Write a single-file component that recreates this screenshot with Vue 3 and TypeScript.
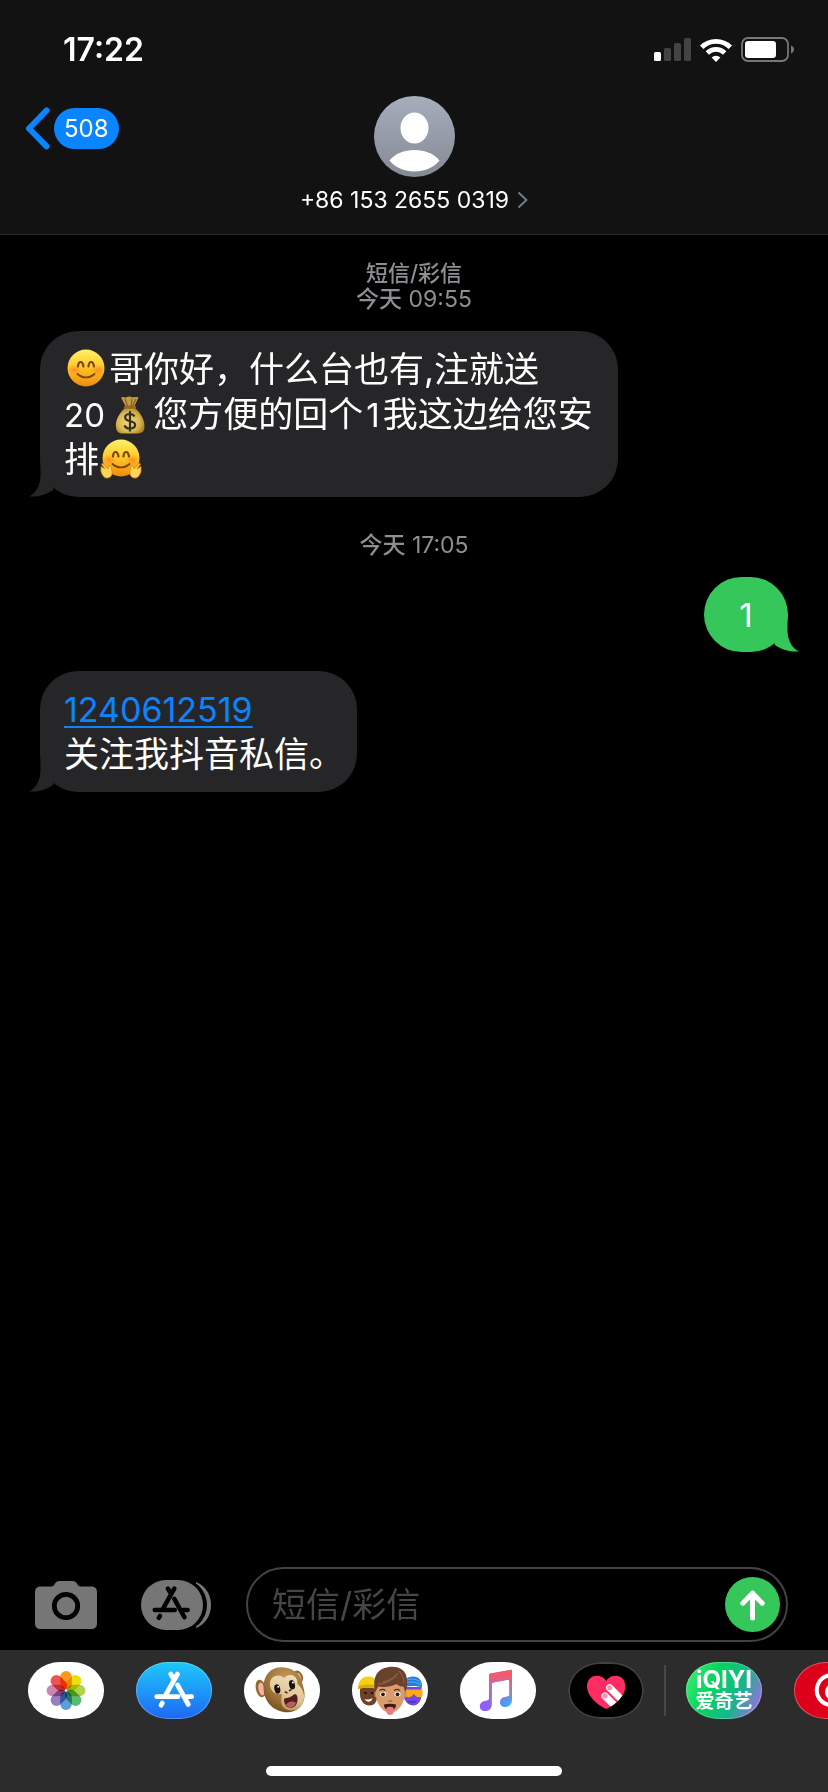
<script setup lang="ts">
import { ref } from 'vue'

type Piece =
  | { kind: 'text' | 'number' | 'link'; value: string }
  | { kind: 'smile' | 'money' | 'hug'; value: string }

interface Message {
  id: number
  sent: boolean
  endsWithStop?: boolean
  lines: Piece[][]
}

interface Group {
  id: number
  service?: string
  day: string
  time: string
  messages: Message[]
}

const clock = '17:22'
const unread = 508
const contact = '+86 153 2655 0319'
const draft = ref('')

const groups: Group[] = [
  {
    id: 1,
    service: '短信/彩信',
    day: '今天',
    time: '09:55',
    messages: [
      {
        id: 1,
        sent: false,
        lines: [
          [
            { kind: 'smile', value: '微笑' },
            { kind: 'text', value: '哥你好，什么台也有,注就送' },
          ],
          [
            { kind: 'number', value: '20 ' },
            { kind: 'money', value: '钱袋' },
            { kind: 'text', value: '您方便的回个' },
            { kind: 'number', value: '1' },
            { kind: 'text', value: '我这边给您安' },
          ],
          [
            { kind: 'text', value: '排' },
            { kind: 'hug', value: '拥抱' },
          ],
        ],
      },
    ],
  },
  {
    id: 2,
    day: '今天',
    time: '17:05',
    messages: [
      { id: 2, sent: true, lines: [[{ kind: 'number', value: '1' }]] },
      {
        id: 3,
        sent: false,
        endsWithStop: true,
        lines: [
          [{ kind: 'link', value: '1240612519' }],
          [{ kind: 'text', value: '关注我抖音私信。' }],
        ],
      },
    ],
  },
]

const petals = ['#f8981d', '#ecdf0c', '#b3d24b', '#5cbb72', '#5a9fdc', '#9680bf', '#d084b2', '#f05450']
</script>

<template>
  <div class="screen" lang="zh-CN">
    <header class="top">
      <div class="status">
        <time class="clock">{{ clock }}</time>
        <div class="indicators">
          <svg class="signal" viewBox="0 0 37 24" role="img" aria-label="信号">
            <rect x="0" y="14" width="7" height="9" rx="1.6" fill="#fff" />
            <rect x="10" y="10" width="7" height="13" rx="1.6" fill="#434343" />
            <rect x="20" y="5" width="7" height="18" rx="1.6" fill="#434343" />
            <rect x="30" y="0" width="7" height="23" rx="1.6" fill="#434343" />
          </svg>
          <svg class="wifi" viewBox="0 0 32 24" role="img" aria-label="无线网络">
            <g fill="none" stroke="#fff" stroke-width="4.8">
              <path d="M1.7 9.2a20.4 20.4 0 0 1 28.6 0" />
              <path d="M7.3 15a12.4 12.4 0 0 1 17.4 0" />
            </g>
            <path d="M16 24l-4.4-4.5a6.3 6.3 0 0 1 8.8 0z" fill="#fff" />
          </svg>
          <svg class="battery" viewBox="0 0 53 25" role="img" aria-label="电量">
            <rect x="1" y="1" width="46" height="23" rx="6" fill="none" stroke="#777" stroke-width="1.8" />
            <rect x="4" y="4" width="31" height="17" rx="3.2" fill="#fff" />
            <path d="M50 8.5c2 .8 3 2.2 3 4s-1 3.200-3 4z" fill="#777" />
          </svg>
        </div>
      </div>
      <div class="nav">
        <button class="back" type="button" aria-label="返回，508 条未读">
          <svg class="chevron" viewBox="0 0 25 43" aria-hidden="true">
            <path d="M21.500 3.500L4 21.500l17.500 17.800" fill="none" stroke="#0a84ff" stroke-width="6" stroke-linecap="round" stroke-linejoin="round" />
          </svg>
          <span class="badge">{{ unread }}</span>
        </button>
        <button class="contact" type="button">
          <svg class="avatar" viewBox="0 0 81 81" aria-hidden="true">
            <defs>
              <linearGradient id="avatarFill" x1="0" y1="0" x2="0" y2="1">
                <stop offset="0" stop-color="#a6adbc" />
                <stop offset="1" stop-color="#858a94" />
              </linearGradient>
            </defs>
            <circle cx="40.500" cy="40.500" r="40.500" fill="url(#avatarFill)" />
            <ellipse cx="40.500" cy="32" rx="14" ry="15.500" fill="#fff" />
            <path d="M15.500 64.500C21 57.500 30 54 40.500 54s19.500 3.500 25 10.500C59 72 50.500 75.500 40.500 75.500S22 72 15.500 64.500z" fill="#fff" />
          </svg>
          <span class="phone">
            {{ contact }}
            <svg class="more" viewBox="0 0 10 18" aria-hidden="true">
              <path d="M1 2l7.500 7L1 16" fill="none" stroke="#73808f" stroke-width="1.8" stroke-linecap="round" />
            </svg>
          </span>
        </button>
      </div>
    </header>

    <main class="thread">
      <section v-for="group in groups" :key="group.id" class="group">
        <p class="stamp">
          <strong v-if="group.service">{{ group.service }}</strong>
          <span class="when"><b>{{ group.day }}</b> {{ group.time }}</span>
        </p>
        <div v-for="m in group.messages" :key="m.id" class="bubble" :class="{ sent: m.sent, stop: m.endsWithStop }">
          <div v-for="(line, i) in m.lines" :key="i" class="line">
            <template v-for="(p, j) in line" :key="j">
              <span v-if="p.kind === 'text'">{{ p.value }}</span>
              <span v-else-if="p.kind === 'number'" class="number" :class="{ inner: j > 0 }">{{ p.value }}</span>
              <a v-else-if="p.kind === 'link'" class="link" :href="`tel:${p.value}`">{{ p.value }}</a>
              <svg v-else-if="p.kind === 'money'" class="emoji bag" viewBox="2 0 39 38" role="img" :aria-label="p.value">
                <defs>
                  <radialGradient id="bagFill" cx=".45" cy=".55" r=".6">
                    <stop offset="0" stop-color="#f0d879" />
                    <stop offset=".65" stop-color="#d9b650" />
                    <stop offset="1" stop-color="#a37b25" />
                  </radialGradient>
                </defs>
                <path d="M9 1.500c2-1.500 3.500.5 5 0s3-1.500 5-.5 4-1 7.500.5L22 11h-8z" fill="#c49a43" />
                <path d="M13 3l3 8M20 3l-1 8M24 3l-4 8" stroke="#84601f" stroke-width="1.200" fill="none" />
                <path d="M13 12C7 17 3 25 4 31c.5 5 3 6.500 7 6.500h14c5 0 7.500-2 7.500-7C32.500 23 28 16 23 12z" fill="url(#bagFill)" />
                <rect x="12" y="9.500" width="12" height="3.200" rx="1.600" fill="#936b27" />
                <path d="M22.500 20.500c-1-2-2.700-2.500-4.700-2.500-2.800 0-4.600 1.500-4.600 3.500 0 5 9.900 2.500 9.900 7.300 0 2.200-2.100 3.700-5.100 3.700-2.600 0-4.700-1-5.400-3.200M18 15v20.500" fill="none" stroke="#33302a" stroke-width="2.200" />
              </svg>
              <svg v-else class="emoji" viewBox="0 0 45 40" role="img" :aria-label="p.value">
                <defs>
                  <linearGradient id="faceFill" x1="0" y1="0" x2="0" y2="1">
                    <stop offset="0" stop-color="#fff06a" />
                    <stop offset=".45" stop-color="#ffcb2c" />
                    <stop offset="1" stop-color="#f08a0c" />
                  </linearGradient>
                  <radialGradient id="blush">
                    <stop offset="0" stop-color="#ff7a1e" stop-opacity=".75" />
                    <stop offset="1" stop-color="#ff8a1e" stop-opacity="0" />
                  </radialGradient>
                </defs>
                <circle cx="22" cy="19" r="18.500" fill="url(#faceFill)" />
                <ellipse cx="10.500" cy="21" rx="7" ry="5.500" fill="url(#blush)" />
                <ellipse cx="33.500" cy="21" rx="7" ry="5.500" fill="url(#blush)" />
                <path d="M14 17.500c.5-6 4.500-6 5.500 0M24.500 17.500c.5-6 4.500-6 5.500 0" fill="none" stroke="#7c4408" stroke-width="2.200" stroke-linecap="round" />
                <path d="M13.500 25c4.500 4.500 12.500 4.500 17 0" fill="none" stroke="#7c4408" stroke-width="1.800" stroke-linecap="round" />
                <g v-if="p.kind === 'hug'" fill="#ffd657" stroke="#dc8709" stroke-width=".8" stroke-linejoin="round">
                  <path d="M2 27.500l4 2.500-3.500-5 1.500-.5 5 5.500c0-3 2.500-4 3-3l1 5.500c.5 3.500-1 6-4.500 6.500-3 .5-5-2-6.500-6.500z" />
                  <path d="M42 27.500l-4 2.500 3.500-5-1.500-.5-5 5.500c0-3-2.500-4-3-3l-1 5.500c-.5 3.500 1 6 4.500 6.500 3 .5 5-2 6.500-6.500z" />
                </g>
              </svg>
            </template>
          </div>
          <svg class="tail" viewBox="0 0 26 38" aria-hidden="true">
            <path d="M11.500 0v16c0 9.500-4 18-11.500 21.500 9.500.6 18-1.700 24.500-7L26 0z" />
          </svg>
        </div>
      </section>
    </main>

    <form class="composer" @submit.prevent>
      <button class="plain" type="button" aria-label="相机">
        <svg class="camera" viewBox="0 0 62 48" aria-hidden="true">
          <path d="M6 5.500h10.500c1.500 0 2-.7 3-2C20.700 1.500 22 0 24.500 0h13c2.500 0 3.800 1.500 5 3.500 1 1.300 1.500 2 3 2H56c4 0 6 2 6 6V42c0 4-2 6-6 6H6c-4 0-6-2-6-6V11.500c0-4 2-6 6-6z" fill="#767676" />
          <circle cx="31" cy="25" r="11.700" fill="none" stroke="#000" stroke-width="4.800" />
        </svg>
      </button>
      <button class="plain" type="button" aria-label="App 抽屉">
        <svg class="drawer" viewBox="0 0 70 50" aria-hidden="true">
          <path d="M55 2c9 3.500 15 12 15 23s-6 19.500-15 23z" fill="#767676" />
          <rect x="0" y="-2" width="66" height="54" rx="27" fill="#000" />
          <rect x="0" y="0" width="62" height="50" rx="25" fill="#767676" />
          <g transform="translate(-5.700 -2.700) scale(.94)" fill="none" stroke="#000" stroke-width="4.800" stroke-linecap="round">
            <path d="M41.500 12L29.700 33M26.300 41l-1.300 2.200M34.700 12l3 5M41.500 23l10.800 19.500M20.700 34.700H42M51 34.700h4.700" />
          </g>
        </svg>
      </button>
      <div class="field">
        <input v-model="draft" type="text" placeholder="短信/彩信" aria-label="短信/彩信" />
        <button class="send" type="submit" aria-label="发送">
          <svg viewBox="0 0 55 55" aria-hidden="true">
            <path d="M27.500 41V16M17.800 26.200l9.700-10 9.700 10" fill="none" stroke="#fff" stroke-width="5" stroke-linecap="round" stroke-linejoin="round" />
          </svg>
        </button>
      </div>
    </form>

    <footer class="dock">
      <nav class="apps" aria-label="iMessage App">
        <button class="app white" type="button" aria-label="照片">
          <svg viewBox="0 0 76 57" aria-hidden="true">
            <g class="petals" transform="translate(38 28.500)">
              <rect v-for="(color, i) in petals" :key="color" x="-5.800" y="-19.400" width="11.600" height="18.400" rx="5.800" :fill="color" :transform="`rotate(${i * 45})`" />
            </g>
          </svg>
        </button>
        <button class="app store" type="button" aria-label="App Store">
          <svg viewBox="0 0 76 57" aria-hidden="true">
            <g fill="none" stroke="#fff" stroke-width="4.800" stroke-linecap="round">
              <path d="M41.500 12L29.700 33M26.300 41l-1.300 2.200M34.700 12l3 5M41.500 23l10.800 19.500M20.700 34.700H42M51 34.700h4.700" />
            </g>
          </svg>
        </button>
        <button class="app white" type="button" aria-label="拟我表情">
          <svg viewBox="0 0 76 57" aria-hidden="true">
            <defs>
              <radialGradient id="fur" cx=".55" cy=".25" r=".8">
                <stop offset="0" stop-color="#c39a5a" />
                <stop offset=".6" stop-color="#9c7238" />
                <stop offset="1" stop-color="#6f4a1e" />
              </radialGradient>
              <linearGradient id="muzzle" x1=".6" y1="0" x2=".3" y2="1">
                <stop offset="0" stop-color="#f0dcb8" />
                <stop offset=".6" stop-color="#e0c393" />
                <stop offset="1" stop-color="#b48a50" />
              </linearGradient>
            </defs>
            <ellipse cx="16.800" cy="26.500" rx="5" ry="9" fill="#94692f" transform="rotate(-12 16.800 26.500)" />
            <ellipse cx="17.500" cy="27" rx="3" ry="6.500" fill="#f2b3ae" transform="rotate(-12 17.500 27)" />
            <ellipse cx="54" cy="15" rx="4.800" ry="6.600" fill="#94692f" transform="rotate(-20 54 15)" />
            <ellipse cx="54" cy="15.500" rx="3" ry="4.600" fill="#f2b3ae" transform="rotate(-20 54 15.500)" />
            <path d="M37 5.300c11 0 19 6 21 15 1.300 5 3 9 2.500 14-.6 9-7 15.500-16 16-13 .5-25-9-25-25C19.500 13 27 5.300 37 5.300z" fill="url(#fur)" />
            <path d="M26 23c-.3-6 3-9.500 8-9.500 3 0 4.500 1 6 2.500 1.500-2 4-3.500 7-3 4.500.5 6.500 4 6.500 9 4.500 4 7 9 6.500 14-1 8-6 12.500-13 12.500-7 0-11-5-9.500-13.500l.5-3c-6 1-11.500-2-12-9z" fill="url(#muzzle)" />
            <ellipse cx="33.300" cy="27" rx="2.900" ry="4.700" fill="#17120e" transform="rotate(-14 33.300 27)" />
            <ellipse cx="48" cy="22.700" rx="2.900" ry="4.700" fill="#17120e" transform="rotate(-14 48 22.700)" />
            <circle cx="34.200" cy="24.700" r="1" fill="#fff" />
            <circle cx="48.900" cy="20.400" r="1" fill="#fff" />
            <path d="M41.300 30l1.700.7M45.500 28.600l1.500-.9" stroke="#4c3019" stroke-width="1.600" stroke-linecap="round" />
            <path d="M40.300 36.500c4-.3 7-1.800 10-4.200 2.400-.8 3.500 2 3.200 5.700-.4 4.800-3.200 8-7 7.800-4-.2-7.500-4.800-6.200-9.300z" fill="#541d20" />
            <path d="M42 42.500c2.300-3 6.800-4 10-1.800-1.200 3-3.300 5-5.700 4.800-1.800-.2-3.300-1.200-4.300-3z" fill="#b36062" />
          </svg>
        </button>
        <button class="app white" type="button" aria-label="拟我表情贴纸">
          <svg viewBox="0 0 76 57" aria-hidden="true">
            <path d="M8 25h17v10c0 5-3 8.500-7.500 8.500C11.500 43.500 8 38 8 32z" fill="#6f4227" />
            <path d="M6 27c0-8 4-12.500 10.500-12.500 4 0 7 2 8.500 5.500v7c-6-1.800-12-1.800-19 0z" fill="#f7cf18" />
            <path d="M6 27c6-2 13-2 19-.5v-3c-6-1.500-13-1-18.700.7z" fill="#dba909" />
            <circle cx="13.500" cy="31" r="1.300" fill="#1d110b" />
            <circle cx="20" cy="31" r="1.300" fill="#1d110b" />
            <path d="M12.500 37c3 1 5.500.5 8-1-.5 4-5.500 5.500-8 1z" fill="#fff" />
            <path d="M52 25h17.500v7c0 7-3.500 11.500-8.500 11.500-4 0-9-4-9-9z" fill="#7149dc" />
            <path d="M52 25c-1-7 3-10.500 9-10.500 5.500 0 9.500 3.500 9 11-5-2-11-2-18-.5z" fill="#237ddb" />
            <path d="M55 18c5-2 10-1 14 3M54 21c5-2 10-1 15 2" fill="none" stroke="#57b0fa" stroke-width="1" />
            <path d="M53 27.500h17.500V34c-2.500 1.700-5 1.700-7 0l-1.500-2-2 2c-2 1.500-4 1.700-7 .5z" fill="#fba81c" />
            <path d="M56 39.500c3 .8 6 .8 8 0" stroke="#4a27a5" stroke-width="1.200" fill="none" />
            <ellipse cx="24.500" cy="32" rx="2" ry="3.500" fill="#c98a5c" />
            <ellipse cx="52.500" cy="32" rx="2" ry="3.500" fill="#c98a5c" />
            <path d="M24 20h28.500v13c0 8-7 18-14.200 18S24 41 24 33z" fill="#d99c6c" />
            <path d="M23.500 30C20 17 24 6.500 37 5c9-1 15 2.500 17 8 1.800 5 1.500 11-.5 17l-2-5.500c-2.500.3-5-.7-7-2.500C39 25 31 25.500 26 24.500z" fill="#69422d" />
            <path d="M26 22c6 0 15-3 20-11M31 20c6-1 11-4 14-8M47 9c3 3 5 7 5 12" fill="none" stroke="#8b5c3e" stroke-width="1.300" />
            <path d="M27.500 28.600c2-1.500 4.500-1.500 6 0M42 28.600c2-1.500 4.500-1.500 6 0" fill="none" stroke="#54321d" stroke-width="1.200" />
            <ellipse cx="31" cy="32.300" rx="3" ry="2.200" fill="#fff" />
            <ellipse cx="45.500" cy="32.300" rx="3" ry="2.200" fill="#fff" />
            <circle cx="31" cy="32.300" r="1.900" fill="#25180f" />
            <circle cx="45.500" cy="32.300" r="1.900" fill="#25180f" />
            <path d="M36.500 38.500c1 1 2.500 1 3.500 0" stroke="#a9663c" stroke-width="1.200" fill="none" />
            <path d="M32 42.500c4-1 8-1 12 0 0 4-3 6-6 6s-6-2-6-6z" fill="#421817" />
            <path d="M34.500 45.500c2-1 5-1 7 0V50c0 4-7 4-7 0z" fill="#ee7b80" />
          </svg>
        </button>
        <button class="app white" type="button" aria-label="音乐">
          <svg viewBox="0 0 76 57" aria-hidden="true">
            <defs>
              <linearGradient id="noteTop" x1="0" y1="0" x2="0" y2="1">
                <stop offset=".1" stop-color="#fd5768" />
                <stop offset=".45" stop-color="#c66ca8" stop-opacity=".8" />
                <stop offset=".8" stop-color="#fd5768" stop-opacity="0" />
              </linearGradient>
              <linearGradient id="noteBase" x1="0" y1="0" x2="1" y2="0">
                <stop offset="0" stop-color="#9857ff" />
                <stop offset=".4" stop-color="#7b6df8" />
                <stop offset="1" stop-color="#31b5f8" />
              </linearGradient>
              <path id="note" d="M29 13.500c0-1.200.5-1.800 1.700-2l19.600-3.600c1.200-.2 1.700.3 1.700 1.500V38c0 4-2.500 7-6.500 7-3.500 0-5.500-2-5.500-4.800 0-3 2-4.700 5-5.200 3.500-.6 4.300-1 4.300-3V18.800c0-1-.5-1.300-1.500-1.100l-14.600 2.700c-1 .2-1.400.6-1.400 1.600V42c0 4.500-2.500 7-6.500 7-3.500 0-5.500-2-5.500-4.800 0-3 2-4.700 5-5.200 3.500-.6 4.200-1 4.200-3z" />
            </defs>
            <use href="#note" fill="url(#noteBase)" />
            <use href="#note" fill="url(#noteTop)" />
          </svg>
        </button>
        <button class="app black" type="button" aria-label="Digital Touch">
          <svg viewBox="0 0 76 57" aria-hidden="true">
            <defs>
              <clipPath id="heartClip">
                <path d="M38.200 47C29 42.500 19 34 19 24.500c0-6.500 4-10.800 9.500-10.800 4 0 7.500 1.800 9.700 5 2.200-3.200 5.700-5 9.700-5 5.500 0 9.400 4.300 9.400 10.800C57.300 34 47.500 42.500 38.200 47z" />
              </clipPath>
            </defs>
            <g clip-path="url(#heartClip)">
              <rect width="76" height="57" fill="#ff2d64" />
              <path d="M41.700 25.700L60 44M37 34l18 18" stroke="#fff" stroke-width="7.200" stroke-linecap="round" />
              <circle cx="41.700" cy="25.700" r="2.500" fill="#ff8eac" />
              <circle cx="37" cy="34" r="2.500" fill="#ff8eac" />
            </g>
          </svg>
        </button>
        <span class="divider"></span>
        <button class="app iqiyi" type="button">
          <span class="latin">iQIYI</span>
          <span class="han">爱奇艺</span>
        </button>
        <button class="app red" type="button" aria-label="网易云音乐">
          <svg viewBox="0 0 76 57" aria-hidden="true">
            <path d="M44 14.500A15 15 0 1 0 52 33c1-6-3-10-8-10.500-7-.5-11 3-11 8 0 6 9 7 9 0L38.500 17" fill="none" stroke="#fff" stroke-width="4" stroke-linecap="round" />
          </svg>
        </button>
      </nav>
      <div class="home"></div>
    </footer>
  </div>
</template>

<style>
body {
  background: #000;
}
</style>

<style scoped>
.screen {
  display: flex;
  flex-direction: column;
  box-sizing: border-box;
  min-height: 100vh;
  overflow: hidden;
  background: #000;
  color: #fff;
  font-family: Inter, "Noto Sans CJK SC", sans-serif;
}

svg {
  display: block;
  flex: none;
}

button {
  margin: 0;
  padding: 0;
  border: 0;
  background: none;
  color: inherit;
  font: inherit;
}

.top {
  background: #121212;
  border-bottom: 1px solid #2b2b2c;
}

.status {
  display: flex;
  align-items: center;
  justify-content: space-between;
  height: 99px;
  padding: 0 34px 0 63px;
}

.clock {
  font-size: 32px;
  font-weight: 600;
}

.indicators {
  display: flex;
  align-items: center;
  gap: 9px;
}

.signal {
  width: 37px;
  height: 24px;
}

.wifi {
  width: 32px;
  height: 24px;
}

.battery {
  width: 53px;
  height: 25px;
}

.nav {
  display: grid;
  grid-template-columns: 1fr auto 1fr;
  align-items: start;
  height: 135px;
  padding: 0 25px;
}

.back {
  display: flex;
  align-items: center;
  justify-self: start;
  gap: 4px;
  margin-top: 8px;
}

.chevron {
  width: 25px;
  height: 43px;
}

.badge {
  padding: 0 10px;
  border-radius: 21px;
  background: #0a84ff;
  font-size: 24px;
  line-height: 41px;
}

.contact {
  display: flex;
  flex-direction: column;
  align-items: center;
  gap: 7px;
  margin-top: -3px;
}

.avatar {
  width: 81px;
  height: 81px;
}

.phone {
  display: flex;
  align-items: center;
  gap: 9px;
  font-size: 23px;
  line-height: 32px;
}

.more {
  width: 10px;
  height: 18px;
}

.thread {
  flex: 1;
  padding: 25px 40px;
}

.group {
  display: flex;
  flex-direction: column;
  align-items: flex-start;
  gap: 19px;
}

.group + .group {
  margin-top: 35px;
}

.stamp {
  display: flex;
  flex-direction: column;
  align-self: center;
  align-items: center;
  margin: 0;
  color: #8e8e93;
  font-size: 22px;
  line-height: 26px;
}

.when {
  font-size: 23px;
}

.stamp strong,
.stamp b {
  font-weight: 500;
}

.bubble {
  position: relative;
  box-sizing: border-box;
  min-width: 84px;
  padding: 16px 25px 15px 24px;
  border-radius: 38px;
  background: #262628;
  font-size: 35px;
}

.bubble.stop {
  padding-right: 13px;
}

.bubble.sent {
  align-self: flex-end;
  padding: 15px 24px;
  background: #35c759;
  text-align: center;
}

.line {
  height: 45px;
  line-height: 45px;
  white-space: pre;
}

.number {
  font-size: 33px;
}

.inner {
  margin: 0 3px;
}

.link {
  color: #0a84ff;
  font-size: 34px;
  text-decoration-thickness: 2px;
  text-underline-offset: 4px;
}

.emoji {
  display: inline-block;
  width: 45px;
  height: 40px;
  vertical-align: -7px;
}

.emoji.bag {
  width: 39px;
  height: 38px;
}

.tail {
  position: absolute;
  bottom: 0;
  left: -11px;
  width: 26px;
  height: 38px;
  fill: #262628;
}

.sent .tail {
  right: -11px;
  left: auto;
  transform: scaleX(-1);
  fill: #35c759;
}

.composer {
  display: flex;
  align-items: center;
  padding: 0 40px 8px 35px;
}

.camera {
  width: 62px;
  height: 48px;
  margin-right: 44px;
}

.drawer {
  width: 70px;
  height: 50px;
  margin-right: 35px;
}

.field {
  display: flex;
  flex: 1;
  align-items: center;
  box-sizing: border-box;
  min-width: 0;
  height: 75px;
  padding: 0 6px 0 24px;
  border: 2px solid #434345;
  border-radius: 38px;
}

.field input {
  flex: 1;
  min-width: 0;
  padding: 0;
  border: 0;
  outline: 0;
  background: none;
  color: #fff;
  font-family: inherit;
  font-size: 34px;
}

.field input::placeholder {
  color: #464648;
  opacity: 1;
}

.send {
  width: 55px;
  height: 55px;
  border-radius: 50%;
  background: #35c759;
}

.dock {
  display: flex;
  flex-direction: column;
  align-items: center;
  box-sizing: border-box;
  height: 142px;
  padding: 12px 0 16px;
  background: #2c2c2c;
}

.apps {
  display: flex;
  align-items: center;
  align-self: stretch;
  gap: 32px;
  overflow: hidden;
  padding-left: 28px;
}

.app {
  flex: none;
  box-sizing: border-box;
  width: 76px;
  height: 57px;
  overflow: hidden;
  border-radius: 32px / 28px;
}

.white {
  background: #fff;
}

.store {
  background: linear-gradient(#1ec8fb, #1f68f2);
  box-shadow: inset 0 0 0 1px #ffffff40;
}

.black {
  background: #000;
  box-shadow: inset 0 0 0 2px #414141;
}

.petals rect {
  mix-blend-mode: multiply;
}

.divider {
  flex: none;
  width: 2px;
  height: 51px;
  margin: 0 -12px;
  background: #474747;
}

.iqiyi {
  display: flex;
  flex-direction: column;
  align-items: center;
  justify-content: center;
  background: linear-gradient(115deg, #3bee72 5%, #06d35f 35%, #18b58b 65%, #9272dc 90%);
  box-shadow: inset 0 0 0 1px #ffffff40;
  font-weight: 700;
}

.latin {
  font-size: 24px;
  line-height: 22px;
}

.han {
  font-size: 19px;
  line-height: 22px;
}

.red {
  background: #dd001b;
  box-shadow: inset 0 0 0 1px #ffffff50;
}

.home {
  width: 296px;
  height: 10px;
  margin-top: auto;
  border-radius: 5px;
  background: #fff;
}
</style>
